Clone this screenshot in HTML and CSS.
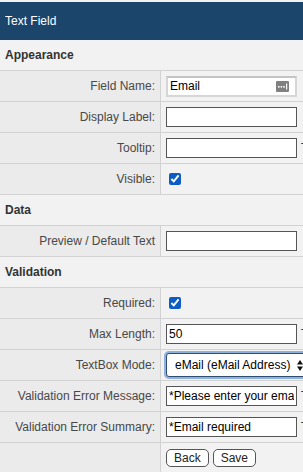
FILE: index.html
```html
<!DOCTYPE html>
<html lang="en">
<head>
    <meta charset="UTF-8">
    <meta name="viewport" content="width=device-width, initial-scale=1.0">
    <title>Text Field</title>
    <link rel="stylesheet" href="styles.css">
</head>
<body>
    <div class="title">Text Field</div>

    <div class="section">Appearance</div>
    <div class="row">
        <div class="label">Field Name:</div>
        <div class="value">
            <div class="name-box">
                <span>Email</span>
                <svg class="dots" width="13" height="11" viewBox="0 0 13 11">
                    <rect width="13" height="11" rx="1" fill="#808080"/>
                    <rect x="2" y="5" width="1.6" height="1.6" fill="#fff"/>
                    <rect x="4.6" y="5" width="1.6" height="1.6" fill="#fff"/>
                    <rect x="7.2" y="5" width="1.6" height="1.6" fill="#fff"/>
                    <rect x="10" y="2.5" width="1.2" height="6" fill="#fff"/>
                </svg>
            </div>
        </div>
    </div>
    <div class="row">
        <div class="label">Display Label:</div>
        <div class="value"><input class="field" type="text"></div>
    </div>
    <div class="row">
        <div class="label">Tooltip:</div>
        <div class="value"><input class="field" type="text"><span class="tag">T</span></div>
    </div>
    <div class="row">
        <div class="label">Visible:</div>
        <div class="value"><input class="check" type="checkbox" checked></div>
    </div>

    <div class="section">Data</div>
    <div class="row">
        <div class="label">Preview / Default Text</div>
        <div class="value"><input class="field" type="text"></div>
    </div>

    <div class="section">Validation</div>
    <div class="row">
        <div class="label">Required:</div>
        <div class="value"><input class="check" type="checkbox" checked></div>
    </div>
    <div class="row">
        <div class="label">Max Length:</div>
        <div class="value"><input class="field" type="text" value="50"><span class="tag">T</span></div>
    </div>
    <div class="row">
        <div class="label">TextBox Mode:</div>
        <div class="value">
            <div class="select-wrap">
                <select class="mode">
                    <option>eMail (eMail Address)</option>
                </select>
                <svg class="arrows" width="6" height="11" viewBox="0 0 6 11">
                    <path d="M0 4.5 L3 0 L6 4.5 Z" fill="#111"/>
                    <path d="M0 6.5 L3 11 L6 6.5 Z" fill="#111"/>
                </svg>
            </div>
        </div>
    </div>
    <div class="row">
        <div class="label">Validation Error Message:</div>
        <div class="value"><input class="field" type="text" value="*Please enter your email address"><span class="tag">T</span></div>
    </div>
    <div class="row">
        <div class="label">Validation Error Summary:</div>
        <div class="value"><input class="field" type="text" value="*Email required"><span class="tag">T</span></div>
    </div>
    <div class="row">
        <div class="label"></div>
        <div class="value buttons">
            <button class="btn">Back</button>
            <button class="btn">Save</button>
        </div>
    </div>
</body>
</html>
```

FILE: styles.css
```css
body {
    font-family: 'Liberation Sans', Arial, sans-serif;
    font-size: 12px;
    margin: 0;
    padding-top: 2px;
    background: #f2f2f2;
    color: #484848;
    overflow: hidden;
    width: 303px;
}

.title {
    background: #1c456c;
    color: white;
    height: 38px;
    line-height: 38px;
    padding-left: 5px;
}

.section {
    height: 30px;
    line-height: 30px;
    padding-left: 5px;
    font-weight: 700;
    color: #333;
    background: #f2f2f2;
    border-bottom: 1px solid #d2d2d2;
}

.row {
    display: grid;
    grid-template-columns: 161px 1fr;
    height: 30px;
    border-bottom: 1px solid #d2d2d2;
}

.label {
    background: #ebebeb;
    border-right: 1px solid #d2d2d2;
    text-align: right;
    padding-right: 5px;
    line-height: 30px;
    white-space: nowrap;
}

.value {
    display: flex;
    align-items: center;
    padding-left: 5px;
    white-space: nowrap;
    min-width: 0;
}

.field {
    box-sizing: border-box;
    width: 131px;
    height: 20px;
    flex-shrink: 0;
    margin: 0;
    padding: 0 2px;
    border: 1px solid #555;
    border-radius: 0;
    background: white;
    font-family: inherit;
    font-size: 12px;
    color: #000;
}

.tag {
    margin-left: 4px;
    color: #333;
    font-size: 12px;
}

.name-box {
    box-sizing: border-box;
    width: 131px;
    height: 21px;
    display: flex;
    align-items: center;
    justify-content: space-between;
    padding: 0 6px 0 2px;
    background: white;
    border: 2px solid #d6d6d6;
    border-top-color: #c4c4c4;
    color: #000;
}

.check {
    margin: 0 0 0 3px;
    width: 12px;
    height: 12px;
    accent-color: #0c5cc4;
}

.select-wrap {
    position: relative;
    flex-shrink: 0;
}

.mode {
    appearance: none;
    box-sizing: border-box;
    width: 150px;
    height: 24px;
    margin: 0;
    padding: 0 0 0 8px;
    border: 1px solid #2d4d72;
    border-radius: 3px;
    background: white;
    box-shadow: 0 0 0 2px #8fb2dc;
    font-family: inherit;
    font-size: 12px;
    color: #000;
}

.arrows {
    position: absolute;
    left: 131px;
    top: 7px;
}

.buttons {
    gap: 4px;
}

.btn {
    height: 18px;
    padding: 0 7px;
    margin: 0;
    border: 1px solid #555;
    border-radius: 5px;
    background: white;
    font-family: inherit;
    font-size: 12px;
    color: #222;
}
```
